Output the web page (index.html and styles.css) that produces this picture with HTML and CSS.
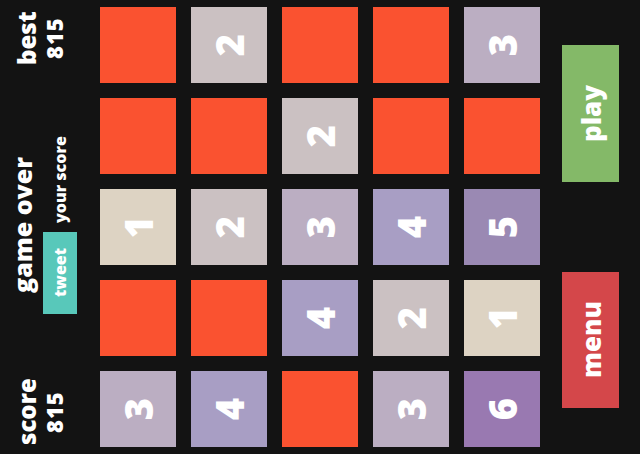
FILE: index.html
```html
<!DOCTYPE html>
<html>
<head>
<meta charset="utf-8">
<link rel="stylesheet" href="styles.css">
</head>
<body>
<div class="app">
  <div class="side">
    <div class="stat v">
      <div class="label">best</div>
      <div class="num">815</div>
    </div>
    <div class="over v">
      <div class="title">game over</div>
      <div class="share">
        <span class="tweet">tweet</span>
        <span class="small">your score</span>
      </div>
    </div>
    <div class="stat v">
      <div class="label">score</div>
      <div class="num">815</div>
    </div>
  </div>
  <div class="board">
    <div class="tile t0"></div>
    <div class="tile t2"><span class="v">2</span></div>
    <div class="tile t0"></div>
    <div class="tile t0"></div>
    <div class="tile t3"><span class="v">3</span></div>

    <div class="tile t0"></div>
    <div class="tile t0"></div>
    <div class="tile t2"><span class="v">2</span></div>
    <div class="tile t0"></div>
    <div class="tile t0"></div>

    <div class="tile t1"><span class="v">1</span></div>
    <div class="tile t2"><span class="v">2</span></div>
    <div class="tile t3"><span class="v">3</span></div>
    <div class="tile t4"><span class="v">4</span></div>
    <div class="tile t5"><span class="v">5</span></div>

    <div class="tile t0"></div>
    <div class="tile t0"></div>
    <div class="tile t4"><span class="v">4</span></div>
    <div class="tile t2"><span class="v">2</span></div>
    <div class="tile t1"><span class="v">1</span></div>

    <div class="tile t3"><span class="v">3</span></div>
    <div class="tile t4"><span class="v">4</span></div>
    <div class="tile t0"></div>
    <div class="tile t3"><span class="v">3</span></div>
    <div class="tile t6"><span class="v">6</span></div>
  </div>
  <div class="controls">
    <div class="btn play v">play</div>
    <div class="btn menu v">menu</div>
  </div>
</div>
</body>
</html>
```
FILE: styles.css
```css
html, body {
  margin: 0;
  padding: 0;
  background: #131313;
}
body {
  width: 640px;
  height: 454px;
  overflow: hidden;
  font-family: "Open Sans", "DejaVu Sans", sans-serif;
  font-weight: 800;
  color: #ffffff;
}
.v {
  writing-mode: vertical-rl;
  transform: rotate(180deg);
}
.app {
  display: flex;
  height: 454px;
}
.side {
  width: 100px;
  display: flex;
  flex-direction: column;
  align-items: flex-start;
  padding-bottom: 4px;
  box-sizing: border-box;
}
.stat {
  height: 76px;
  margin-left: 13px;
  display: flex;
  flex-direction: column;
  justify-content: flex-start;
  align-items: center;
}
.label {
  font-size: 24px;
  line-height: 28px;
}
.num {
  font-size: 22px;
  line-height: 26px;
  letter-spacing: 1px;
}
.over {
  flex: 1;
  margin-left: 7px;
  display: flex;
  flex-direction: column;
  align-items: center;
  justify-content: center;
}
.title {
  font-size: 25px;
  line-height: 30px;
  margin-block-end: 6px;
}
.share {
  display: flex;
  align-items: center;
  gap: 9px;
}
.tweet {
  background: #58c8ba;
  block-size: 34px;
  inline-size: 82px;
  display: flex;
  align-items: center;
  justify-content: center;
  font-size: 16px;
}
.small {
  font-size: 16px;
  line-height: 20px;
}
.board {
  display: grid;
  grid-template-columns: repeat(5, 76px);
  grid-auto-rows: 76px;
  gap: 15px;
  padding-top: 7px;
}
.tile {
  display: flex;
  align-items: center;
  justify-content: center;
  font-size: 38px;
  line-height: 1;
}
.t0 { background: #fa5230; }
.t1 { background: #ddd3c3; }
.t2 { background: #cbc1c2; }
.t3 { background: #bbaec2; }
.t4 { background: #a89ec4; }
.t5 { background: #9a89b3; }
.t6 { background: #9979b1; }
.controls {
  width: 100px;
  display: flex;
  flex-direction: column;
  align-items: flex-start;
  padding: 45px 0 0 22px;
  box-sizing: border-box;
  gap: 90px;
}
.btn {
  width: 57px;
  height: 137px;
  display: flex;
  align-items: center;
  justify-content: center;
  font-size: 26px;
}
.menu {
  height: 136px;
}
.play { background: #84b968; }
.menu { background: #d4474a; }
```
